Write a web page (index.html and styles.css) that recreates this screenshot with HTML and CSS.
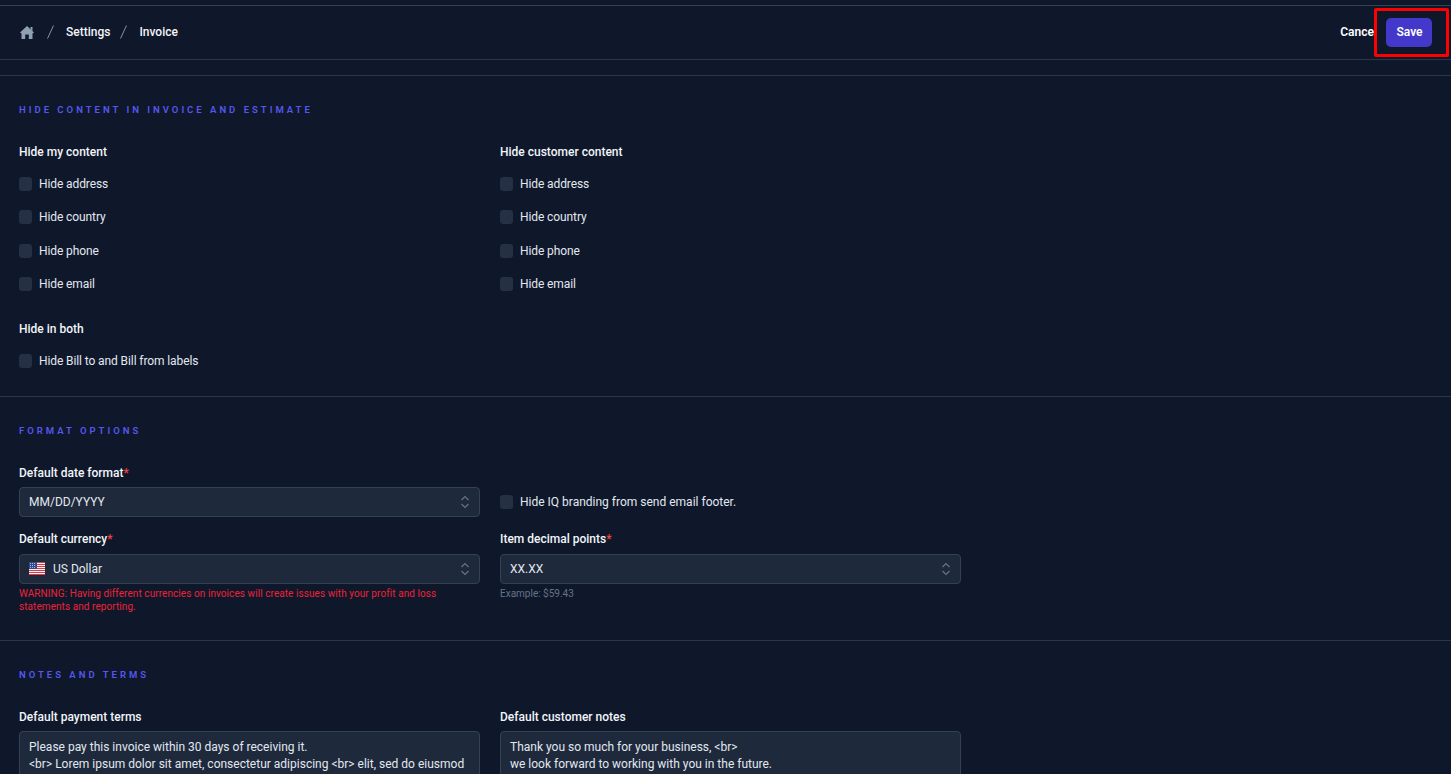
FILE: index.html
```html
<!DOCTYPE html>
<html lang="en">
<head>
<meta charset="utf-8">
<title>Invoice settings</title>
<link rel="stylesheet" href="styles.css">
</head>
<body>
<header class="topbar">
  <nav class="crumbs">
    <svg class="home" viewBox="0 0 14 13" width="14" height="13"><path d="M7 0 14 6.500 12.500 7.500V13H8.800V8.500H5.200V13H1.500V7.500L0 6.500zM10.500 1h2v3.900l-2-1.900z"/></svg>
    <svg class="slash" viewBox="0 0 7 14" width="7" height="14"><path d="M6.500.5.500 13.500"/></svg>
    <span class="crumb">Settings</span>
    <svg class="slash" viewBox="0 0 7 14" width="7" height="14"><path d="M6.500.5.500 13.500"/></svg>
    <span class="crumb">Invoice</span>
  </nav>
  <div class="actions">
    <button class="cancel">Cancel</button>
    <button class="save">Save</button>
  </div>
  <div class="highlight"></div>
</header>
<div class="spacer"></div>

<section class="section hide-section">
  <h2 class="section-title">HIDE CONTENT IN INVOICE AND ESTIMATE</h2>
  <div class="grid">
    <div class="col">
      <h3 class="label">Hide my content</h3>
      <label class="check"><span class="box"></span>Hide address</label>
      <label class="check"><span class="box"></span>Hide country</label>
      <label class="check"><span class="box"></span>Hide phone</label>
      <label class="check"><span class="box"></span>Hide email</label>
    </div>
    <div class="col">
      <h3 class="label">Hide customer content</h3>
      <label class="check"><span class="box"></span>Hide address</label>
      <label class="check"><span class="box"></span>Hide country</label>
      <label class="check"><span class="box"></span>Hide phone</label>
      <label class="check"><span class="box"></span>Hide email</label>
    </div>
  </div>
  <div class="both">
    <h3 class="label">Hide in both</h3>
    <label class="check"><span class="box"></span>Hide Bill to and Bill from labels</label>
  </div>
</section>

<section class="section format-section">
  <h2 class="section-title">FORMAT OPTIONS</h2>
  <div class="grid form-grid">
    <div class="field">
      <div class="label">Default date format<span class="req">*</span></div>
      <div class="select"><span>MM/DD/YYYY</span>
        <svg class="updown" viewBox="0 0 10 16" width="10" height="16"><path d="M1.500 6 5 2.500 8.500 6M1.500 10 5 13.500 8.500 10"/></svg></div>
    </div>
    <div class="field branding">
      <label class="check"><span class="box"></span>Hide IQ branding from send email footer.</label>
    </div>
    <div class="field">
      <div class="label">Default currency<span class="req">*</span></div>
      <div class="select"><span class="currency">
        <svg class="flag" viewBox="0 0 16 13" width="16" height="13"><rect width="16" height="13" fill="#f2f2f2"/><path d="M0 .5h16M0 2.500h16M0 4.500h16M0 6.500h16M0 8.500h16M0 10.500h16M0 12.500h16" stroke="#d43a48" stroke-width="1"/><rect width="8" height="7" fill="#2f4a8f"/><path d="M1 1.500h6M1 3.500h6M1 5.500h6" stroke="#cfd6e8" stroke-width=".8" stroke-dasharray="1 1"/></svg>
        US Dollar</span>
        <svg class="updown" viewBox="0 0 10 16" width="10" height="16"><path d="M1.500 6 5 2.500 8.500 6M1.500 10 5 13.500 8.500 10"/></svg></div>
      <p class="warning">WARNING: Having different currencies on invoices will create issues with your profit and loss statements and reporting.</p>
    </div>
    <div class="field">
      <div class="label">Item decimal points<span class="req">*</span></div>
      <div class="select"><span>XX.XX</span>
        <svg class="updown" viewBox="0 0 10 16" width="10" height="16"><path d="M1.500 6 5 2.500 8.500 6M1.500 10 5 13.500 8.500 10"/></svg></div>
      <p class="hint">Example: $59.43</p>
    </div>
  </div>
</section>

<section class="section notes-section">
  <h2 class="section-title">NOTES AND TERMS</h2>
  <div class="grid">
    <div class="field">
      <div class="label">Default payment terms</div>
      <div class="textarea">Please pay this invoice within 30 days of receiving it.<br>&lt;br&gt; Lorem ipsum dolor sit amet, consectetur adipiscing &lt;br&gt; elit, sed do eiusmod</div>
    </div>
    <div class="field">
      <div class="label">Default customer notes</div>
      <div class="textarea">Thank you so much for your business, &lt;br&gt;<br>we look forward to working with you in the future.</div>
    </div>
  </div>
</section>
</body>
</html>
```
FILE: styles.css
```css
* { box-sizing: border-box; }
html, body { height: 100%; }
body {
  margin: 0;
  height: 774px;
  overflow: hidden;
  background: #0f172a;
  color: #f1f5f9;
  font-family: Roboto, "Liberation Sans", sans-serif;
  font-size: 12px;
  line-height: 16px;
  padding-top: 5px;
}
.topbar {
  position: relative;
  height: 55px;
  border-top: 1px solid #334155;
  border-bottom: 1px solid #293548;
  display: flex;
  align-items: center;
  justify-content: space-between;
  padding: 0 19px 1px 20px;
}
.crumbs { display: flex; align-items: center; }
.home { fill: #8fa0b5; }
.slash { fill: none; stroke: #8494a8; margin-left: 13px; margin-right: 12px; }
.slash + .crumb + .slash { margin-left: 10px; }
.crumb { font-weight: 500; }
.actions { display: flex; align-items: center; gap: 9px; }
.cancel, .save {
  font: inherit;
  font-weight: 600;
  border: 0;
  color: #fff;
  background: none;
  padding: 0;
}
.save {
  width: 46px;
  height: 29px;
  padding-left: 1px;
  border-radius: 5px;
  background: #4338ca;
}
.highlight {
  position: absolute;
  left: 1374px;
  top: 2px;
  width: 75px;
  height: 49px;
  border: 3px solid #f00;
  border-radius: 2px;
  background: linear-gradient(#0f172a, #0f172a) left / 9px 100% no-repeat;
}
.spacer { height: 15px; }
.section { border-top: 1px solid #293548; padding: 0 20px 0 19px; }
.hide-section { height: 321px; padding-top: 26px; }
.format-section { height: 244px; padding-top: 26px; }
.notes-section { padding-top: 26px; }
.section-title {
  margin: 0 0 26px;
  font-size: 9.500px;
  line-height: 16px;
  font-weight: 600;
  letter-spacing: 3px;
  color: #5458f0;
}
.grid {
  display: grid;
  grid-template-columns: 461px 461px;
  column-gap: 20px;
}
.label {
  margin: 0;
  font-size: 12px;
  line-height: 16px;
  font-weight: 500;
  color: #f1f5f9;
}
.req { color: #ef4444; }
.col > .label, .both > .label { margin-bottom: 15px; }
.check {
  display: flex;
  align-items: center;
  gap: 7px;
  height: 17px;
  margin-bottom: 16.500px;
  color: #e2e8f0;
  letter-spacing: -.1px;
}
.box {
  width: 13px;
  height: 14px;
  border-radius: 3px;
  background: #253045;
}
.both { margin-top: 12px; }
.form-grid { row-gap: 14px; }
.field > .label { margin-bottom: 6px; }
.form-grid .field:nth-child(n+3) > .label { margin-bottom: 7px; }
.branding { padding-top: 22px; }
.branding .check { height: 30px; margin: 0; letter-spacing: 0; }
.select, .textarea {
  background: #1e293b;
  border: 1px solid #334155;
  border-radius: 4px;
  color: #e2e8f0;
}
.select {
  height: 30px;
  padding: 0 9px;
  display: flex;
  align-items: center;
  justify-content: space-between;
}
.currency { display: flex; align-items: center; gap: 8px; }
.flag { margin-bottom: 1px; }
.updown { fill: none; stroke: #64748b; stroke-width: 1.200; }
.warning, .hint { margin: 3px 0 0; font-size: 10px; line-height: 13px; }
.warning { color: #ec2339; letter-spacing: .07px; }
.hint { color: #64748b; }
.textarea { height: 80px; padding: 7px 9px; line-height: 17px; }
```
